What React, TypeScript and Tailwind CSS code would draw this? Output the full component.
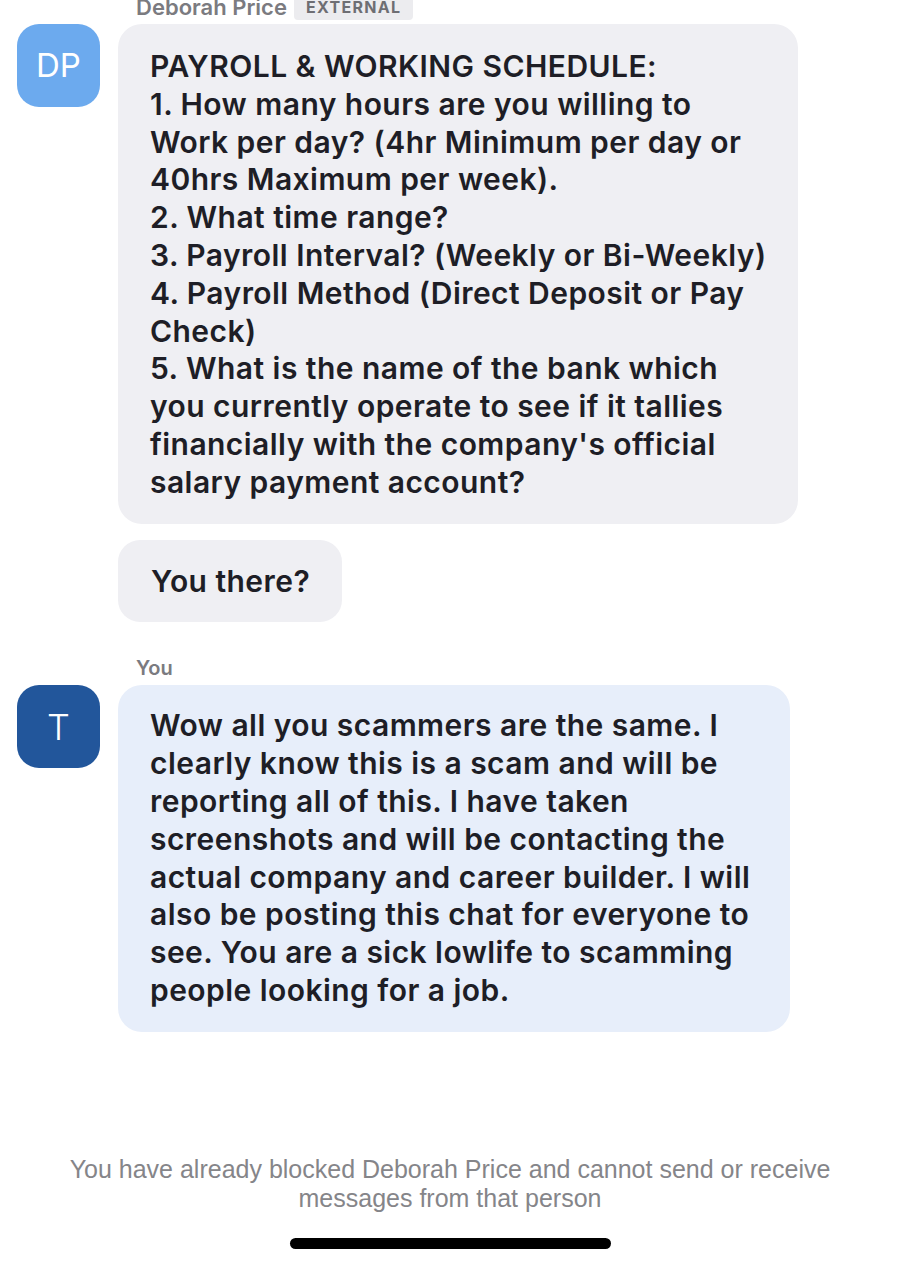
import React from "react";

const font = { fontFamily: "Inter, 'Noto Sans', sans-serif" };

const msg1 = [
  "PAYROLL & WORKING SCHEDULE:",
  "1. How many hours are you willing to",
  "Work per day? (4hr Minimum per day or",
  "40hrs Maximum per week).",
  "2. What time range?",
  "3. Payroll Interval? (Weekly or Bi-Weekly)",
  "4. Payroll Method (Direct Deposit or Pay",
  "Check)",
  "5. What is the name of the bank which",
  "you currently operate to see if it tallies",
  "financially with the company's official",
  "salary payment account?",
];

const msg3 = [
  "Wow all you scammers are the same. I",
  "clearly know this is a scam and will be",
  "reporting all of this. I have taken",
  "screenshots and will be contacting the",
  "actual company and career builder. I will",
  "also be posting this chat for everyone to",
  "see. You are a sick lowlife to scamming",
  "people looking for a job.",
];

function Lines({ lines }: { lines: string[] }) {
  return (
    <div className="text-[30px] leading-[37.8px] font-semibold text-[#1e1e26] tracking-[0.45px]">
      {lines.map((l, i) => (
        <div key={i} className="whitespace-nowrap">
          {l}
        </div>
      ))}
    </div>
  );
}

export default function App() {
  return (
    <div className="w-[900px] h-[1266px] bg-white relative overflow-hidden flex flex-col" style={font}>
      <div className="flex items-center gap-[7px] pl-[136px] mt-[-6px] h-[26px]">
        <span className="text-[22px] font-semibold text-[#7b7b80]">Deborah Price</span>
        <span className="bg-[#ececef] text-[#6e6e73] text-[16px] font-bold tracking-[1.3px] px-[12px] h-[26px] flex items-center rounded-[4px]">
          EXTERNAL
        </span>
      </div>

      <div className="flex gap-[18px] pl-[17px] mt-[4px]">
        <div className="w-[83px] h-[83px] rounded-[22px] bg-[#6caaee] flex items-center justify-center text-white text-[33px] shrink-0">
          DP
        </div>
        <div className="flex flex-col gap-[16px]">
          <div className="w-[680px] bg-[#efeff3] rounded-[24px] pl-[32px] pt-[24px] pb-[22px]">
            <Lines lines={msg1} />
          </div>
          <div className="self-start bg-[#efeff3] rounded-[22px] pl-[33px] pr-[32px] pt-[23px] pb-[22px]">
            <Lines lines={["You there?"]} />
          </div>
        </div>
      </div>

      <div className="pl-[136px] mt-[32px] text-[20px] font-semibold text-[#7b7b80] h-[28px] leading-[28px]">You</div>

      <div className="flex gap-[18px] pl-[17px] mt-[3px]">
        <div className="w-[83px] h-[83px] rounded-[22px] bg-[#22569b] flex items-center justify-center text-white text-[36px] font-light shrink-0">
          T
        </div>
        <div className="w-[672px] bg-[#e7eefa] rounded-[24px] pl-[32px] pt-[22px] pb-[22px]">
          <Lines lines={msg3} />
        </div>
      </div>

      <div className="mt-auto flex flex-col items-center pb-[17px]">
        <div
          className="text-center text-[25px] leading-[29px] text-[#858589] px-[20px]"
          style={{ fontFamily: "'Liberation Sans', Arial, sans-serif" }}
        >
          You have already blocked Deborah Price and cannot send or receive
          <br />
          messages from that person
        </div>
        <div className="mt-[25px] w-[321px] h-[11px] rounded-full bg-black" />
      </div>
    </div>
  );
}
